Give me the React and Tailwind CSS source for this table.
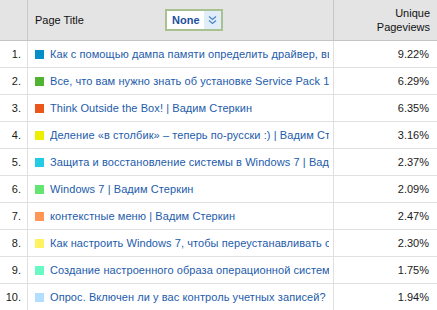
import React from 'react';

const rows = [
  { n: 1, color: '#058dc7', title: 'Как с помощью дампа памяти определить драйвер, вызвавший BSOD | Вадим Стеркин', value: '9.22%' },
  { n: 2, color: '#50b432', title: 'Все, что вам нужно знать об установке Service Pack 1 | Вадим Стеркин', value: '6.29%' },
  { n: 3, color: '#ed561b', title: 'Think Outside the Box! | Вадим Стеркин', value: '6.35%' },
  { n: 4, color: '#edef00', title: 'Деление «в столбик» – теперь по-русски :) | Вадим Стеркин', value: '3.16%' },
  { n: 5, color: '#24cbe5', title: 'Защита и восстановление системы в Windows 7 | Вадим Стеркин', value: '2.37%' },
  { n: 6, color: '#64e572', title: 'Windows 7 | Вадим Стеркин', value: '2.09%' },
  { n: 7, color: '#ff9655', title: 'контекстные меню | Вадим Стеркин', value: '2.47%' },
  { n: 8, color: '#fff263', title: 'Как настроить Windows 7, чтобы переустанавливать систему | Вадим Стеркин', value: '2.30%' },
  { n: 9, color: '#6af9c4', title: 'Создание настроенного образа операционной системы | Вадим Стеркин', value: '1.75%' },
  { n: 10, color: '#b2deff', title: 'Опрос. Включен ли у вас контроль учетных записей? | Вадим Стеркин', value: '1.94%' },
];

const Row = ({ row }) => (
  <div className="grid grid-cols-[28px_306px_103px] h-[27px] border-b border-[#e0e0e0] bg-white">
    <div className="flex items-center justify-end pr-[6px] border-r border-[#e0e0e0] text-[#1a1a1a]">{row.n}.</div>
    <div className="flex items-center pl-[7px] pr-[4px] border-r border-[#e0e0e0] overflow-hidden">
      <span className="w-[9px] h-[9px] shrink-0 mr-[6px]" style={{ backgroundColor: row.color }} />
      <span className="whitespace-nowrap overflow-hidden text-[#1d5cab] tracking-[0.08px]">{row.title}</span>
    </div>
    <div className="flex items-center justify-end pr-[8px] text-[#1a1a1a]">{row.value}</div>
  </div>
);

export default function App() {
  return (
    <div className="w-[437px] h-[310px] overflow-hidden bg-white text-[11px] font-['Liberation_Sans',Arial,sans-serif]">
      <div className="grid grid-cols-[28px_306px_103px] h-[41px] bg-[#e4e4e4] border-b border-[#c4c4c4]">
        <div className="border-r border-[#c8c8c8]" />
        <div className="flex items-center pl-[7px] border-r border-[#c8c8c8] text-[#111]">
          <span className="w-[130px]">Page Title</span>
          <div className="flex items-center h-[22px] w-[58px] border-2 border-[#a9c18f] bg-white">
            <span className="pl-[5px] font-bold text-[#1d4f9c] flex-1">None</span>
            <span className="w-[17px] h-full bg-[#e1eefa] flex items-center justify-center">
              <svg width="9" height="10" viewBox="0 0 9 10" fill="none" stroke="#4a86c8" strokeWidth="1.3">
                <path d="M1 1.5 L4.5 4.5 L8 1.5" />
                <path d="M1 5.5 L4.5 8.5 L8 5.5" />
              </svg>
            </span>
          </div>
        </div>
        <div className="flex flex-col items-end justify-center pr-[7px] leading-[14px] text-[#111]">
          <span>Unique</span>
          <span>Pageviews</span>
        </div>
      </div>
      {rows.map((r) => (
        <Row key={r.n} row={r} />
      ))}
    </div>
  );
}
